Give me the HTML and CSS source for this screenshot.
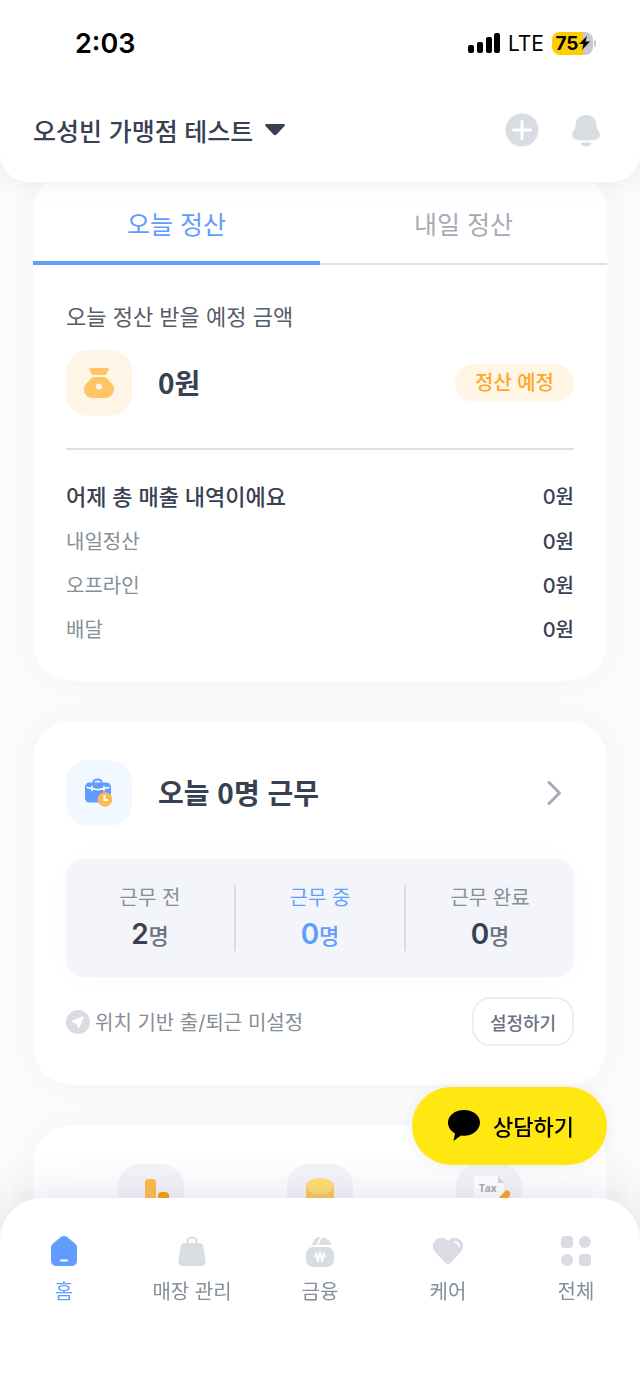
FILE: index.html
```html
<!DOCTYPE html>
<html lang="ko">
<head>
    <meta charset="UTF-8">
    <meta name="viewport" content="width=device-width, initial-scale=1.0">
    <title>오성빈 가맹점 테스트</title>
    <link rel="stylesheet" href="styles.css">
</head>
<body>

<header class="header">
    <div class="status-bar">
        <span class="clock">2:03</span>
        <div class="status-icons">
            <svg width="32" height="20" viewBox="0 0 32 20">
                <rect x="0" y="12" width="6" height="8" rx="2"/>
                <rect x="9" y="9" width="6" height="11" rx="2"/>
                <rect x="18" y="4" width="6" height="16" rx="2"/>
                <rect x="26" y="0" width="6" height="20" rx="2"/>
            </svg>
            <span class="network">LTE</span>
            <div class="battery">
                <span class="battery-level">75</span>
                <svg width="11" height="14" viewBox="0 0 11 14"><path d="M8 0L0 8h4.500L3 14l8-8.500H6.500z"/></svg>
            </div>
        </div>
    </div>
    <div class="title-bar">
        <button class="store-button">
            오성빈 가맹점 테스트
            <svg width="20" height="12" viewBox="0 0 20 12"><path d="M1.500 0h17c1.300 0 1.800 1 1 1.900l-8 8.600c-.9.900-2.100.9-3 0l-8-8.600C-.3 1 .2 0 1.500 0z" fill="#374151"/></svg>
        </button>
        <div class="header-actions">
            <button class="icon-button" aria-label="추가">
                <svg width="34" height="34" viewBox="0 0 34 34"><circle cx="17" cy="17" r="16.500" fill="#d9dce2"/><path d="M17 8.500v17M8.500 17h17" stroke="#fff" stroke-width="3" stroke-linecap="round"/></svg>
            </button>
            <button class="icon-button" aria-label="알림">
                <svg width="28" height="34" viewBox="0 0 28 34"><path d="M14 2C7.500 2 3.500 6.500 3.500 12c0 3-.5 4-1.900 5.800C.6 19 0 20.500 0 22c0 4 4 5.500 14 5.500s14-1.500 14-5.500c0-1.500-.6-3-1.600-4.200-1.400-1.800-1.900-2.800-1.900-5.800C24.500 6.500 20.500 2 14 2z" fill="#d9dce2"/><path d="M10.500 29.500h7c1.500 0 2 .9 1 2-2.300 2.800-6.700 2.800-9 0-1-1.100-.5-2 1-2z" fill="#d9dce2"/></svg>
            </button>
        </div>
    </div>
</header>

<main class="content">
    <section class="card settlement">
        <div class="tabs">
            <button class="tab active">오늘 정산</button>
            <button class="tab">내일 정산</button>
        </div>
        <div class="settlement-body">
            <p class="expect-label">오늘 정산 받을 예정 금액</p>
            <div class="card-row">
                <div class="icon-box orange">
                    <svg width="30" height="30" viewBox="0 0 30 30" fill="#ffc466"><path d="M7 0h16c1.700 0 2.200.8 1.500 2l-2 4c-.4.700-.8 1-1.700 1H9.200c-.9 0-1.300-.3-1.700-1l-2-4C4.800.8 5.300 0 7 0zM9.500 9h11c.8 0 1.300.2 1.900.8l5.200 5.700c1.900 2.100 2.400 3.500 2.400 5.500 0 5-3.500 9-8.500 9h-13C3.500 30 0 26 0 21c0-2 .5-3.400 2.400-5.500l5.200-5.700C8.200 9.200 8.700 9 9.500 9z"/><circle cx="15" cy="18.500" r="3" fill="#fff5e6"/></svg>
                </div>
                <strong class="headline">0원</strong>
                <span class="badge">정산 예정</span>
            </div>
            <table class="sales">
                <tr class="total"><th scope="row">어제 총 매출 내역이에요</th><td>0원</td></tr>
                <tr><th scope="row">내일정산</th><td>0원</td></tr>
                <tr><th scope="row">오프라인</th><td>0원</td></tr>
                <tr><th scope="row">배달</th><td>0원</td></tr>
            </table>
        </div>
    </section>

    <section class="card work">
        <a class="card-row" href="#work">
            <div class="icon-box blue">
                <svg width="30" height="30" viewBox="0 0 30 30"><path d="M9.500 5V4C9.500 2 11 1.500 13.500 1.500S17.500 2 17.500 4V5" fill="none" stroke="#619dff" stroke-width="2"/><rect x="1" y="4.500" width="26" height="20" rx="4.500" fill="#619dff"/><path d="M3 9.500c4 .7 7 1.200 11 2.200 4-1 7-1.500 11-2.200M8 8.500v4M20 8.500v4" fill="none" stroke="#fff" stroke-width="1.500" stroke-linecap="round"/><circle cx="21" cy="21.500" r="7.300" fill="#ffba52"/><path d="M20.500 17V22h3.500" fill="none" stroke="#fff" stroke-width="2"/></svg>
            </div>
            <strong class="headline">오늘 0명 근무</strong>
            <svg class="chevron" width="16" height="24" viewBox="0 0 16 24"><path d="M3 1.500L13.500 12 3 22.500" fill="none" stroke="#a5abb5" stroke-width="3" stroke-linecap="round" stroke-linejoin="round"/></svg>
        </a>
        <div class="work-status">
            <div class="work-item"><span class="work-label">근무 전</span><span class="work-count"><b>2</b>명</span></div>
            <div class="work-item now"><span class="work-label">근무 중</span><span class="work-count"><b>0</b>명</span></div>
            <div class="work-item"><span class="work-label">근무 완료</span><span class="work-count"><b>0</b>명</span></div>
        </div>
        <div class="location">
            <svg width="24" height="24" viewBox="0 0 24 24"><circle cx="12" cy="12" r="12" fill="#d9dce2"/><path d="M16 6.500L6.800 10.500c-1 .5-.9 1.600.1 1.900l3.400 1.200 1.200 3.700c.4 1 1.500 1 1.900.1L17.500 8c.4-1-.5-1.900-1.500-1.500z" fill="#fff"/></svg>
            <span class="location-text">위치 기반 출/퇴근 미설정</span>
            <button class="setting-button">설정하기</button>
        </div>
    </section>

    <section class="card shortcuts">
        <button class="icon-box" aria-label="매출">
            <svg width="36" height="36" viewBox="0 0 36 36"><rect x="12" y="0" width="11" height="34" rx="3" fill="#ffbe4d"/><rect x="25" y="13" width="11" height="21" rx="4" fill="#ff9f00"/></svg>
        </button>
        <button class="icon-box" aria-label="대출">
            <svg width="30" height="38" viewBox="0 0 30 38"><path d="M1 8v22c0 4 6 6 14 6s14-2 14-6V8z" fill="#ffc75a"/><ellipse cx="15" cy="8" rx="14" ry="8" fill="#ffdf75"/></svg>
        </button>
        <button class="icon-box" aria-label="세금">
            <svg width="42" height="42" viewBox="0 0 42 42"><path d="M6 0h24l6 7v35H6z" fill="#fff"/><path d="M30 0l6 7h-6z" fill="#d2d5dc"/><text class="tax" x="11" y="16">Tax</text><path d="M29 29L39 18" stroke="#ffa32b" stroke-width="7" stroke-linecap="round"/></svg>
        </button>
    </section>
</main>

<button class="chat-button">
    <svg width="32" height="32" viewBox="0 0 32 32"><path d="M16 1C7 1 0 6.500 0 13.500c0 5 3 8.800 7 11L5.500 32l7.500-5.500c1 .1 2 .2 3 .2 9 0 16-6 16-13.200S25 1 16 1z"/></svg>
    상담하기
</button>

<nav class="bottom-nav">
    <a class="nav-item active" href="#home">
        <svg width="32" height="32" viewBox="0 0 32 32"><path d="M12.500 2.200c2-1.600 5-1.600 7 0l7.200 6c1.500 1.300 2.300 2.500 2.300 4.500V25c0 4-2 6-6 6H9c-4 0-6-2-6-6V12.700c0-2 .8-3.200 2.300-4.500z" fill="currentColor"/><path d="M13 25.500h6" stroke="#fff" stroke-width="2" stroke-linecap="round"/></svg>
        홈
    </a>
    <a class="nav-item" href="#store">
        <svg width="32" height="32" viewBox="0 0 32 32"><path d="M11.500 9V6.500C11.500 4 13.500 2.500 16 2.500s4.500 1.500 4.500 4V9" fill="none" stroke="#d9dce2" stroke-width="2"/><path d="M8.500 8h15c2 0 3.300 1 3.700 3l2.500 15c.5 3-1 5-4 5H6.300c-3 0-4.500-2-4-5l2.500-15c.4-2 1.700-3 3.700-3z" fill="#d9dce2"/></svg>
        매장 관리
    </a>
    <a class="nav-item" href="#finance">
        <svg width="32" height="32" viewBox="0 0 32 32"><path d="M8 10c.8-3.800 3-7 6-8l2 0-3.500 8zM18 2.500c5 .5 8.500 3 9.500 7.500H14.500z" fill="#d9dce2"/><rect x="2" y="12" width="28" height="20" rx="7" fill="#d9dce2"/><path d="M12 17l2 9.500 2-9.500 2 9.500 2-9.500M10 21h12" fill="none" stroke="#fff" stroke-width="1.700" stroke-linejoin="round"/></svg>
        금융
    </a>
    <a class="nav-item" href="#care">
        <svg width="32" height="32" viewBox="0 0 34 32"><path d="M17 5.500C21 .5 27 1 30.500 4.500s3.500 9 0 12.500L20 28.500c-2 2-4 2-6 0L3.500 17C0 13.500 0 8 3.500 4.500S13 .5 17 5.500z" fill="#d9dce2"/><path d="M24.500 6.500c2.500.3 4 1.800 4.300 4.200" fill="none" stroke="#fff" stroke-width="2" stroke-linecap="round"/></svg>
        케어
    </a>
    <a class="nav-item" href="#all">
        <svg width="32" height="32" viewBox="0 0 32 32" fill="#d9dce2"><rect x="1" y="1" width="12" height="12" rx="3"/><circle cx="25" cy="7" r="6"/><circle cx="7" cy="25" r="6"/><rect x="19" y="19" width="12" height="12" rx="3"/></svg>
        전체
    </a>
</nav>

</body>
</html>
```
FILE: styles.css
```css
* {
    box-sizing: border-box;
}
body {
    font-family: Inter, "Noto Sans CJK KR", sans-serif;
    font-size: 20px;
    color: #374151;
    background-color: #fbfbfb;
    margin: 0;
}
button {
    font: inherit;
    color: inherit;
    background: none;
    border: none;
    padding: 0;
    cursor: pointer;
}
a {
    color: inherit;
    text-decoration: none;
}
svg {
    display: block;
    flex: none;
}
.header {
    position: sticky;
    top: 0;
    z-index: 2;
    background-color: #fff;
    border-radius: 0 0 28px 28px;
    box-shadow: 0 0 24px rgba(0, 0, 0, 0.08);
    padding-bottom: 33px;
}
.status-bar {
    display: flex;
    align-items: center;
    justify-content: space-between;
    padding: 28px 47px 0 75px;
    height: 58px;
    color: #000;
}
.clock {
    font-size: 27px;
    font-weight: 600;
}
.status-icons {
    display: flex;
    align-items: center;
    gap: 8px;
}
.network {
    font-size: 21px;
}
.battery {
    position: relative;
    display: flex;
    align-items: center;
    justify-content: center;
    width: 41px;
    height: 23px;
    border-radius: 8px;
    background: linear-gradient(to right, #ffcc00 75%, #c9c9c9 75%);
}
.battery::after {
    content: "";
    position: absolute;
    left: 42px;
    width: 2px;
    height: 7px;
    border-radius: 0 2px 2px 0;
    background-color: #c9c9c9;
}
.battery-level {
    font-size: 19px;
    font-weight: 700;
}
.title-bar {
    display: flex;
    align-items: center;
    justify-content: space-between;
    padding: 0 40px 0 33px;
    margin-top: 53px;
    height: 38px;
}
.store-button {
    display: flex;
    align-items: center;
    gap: 12px;
    font-size: 25px;
    font-weight: 500;
}
.header-actions {
    display: flex;
    gap: 33px;
}
.content {
    display: flex;
    flex-direction: column;
    gap: 40px;
    padding: 0 33px;
    margin-top: -9px;
}
.card {
    background-color: #fff;
    border-radius: 38px;
    box-shadow: 0 0 36px rgba(0, 0, 0, 0.03);
}
.tabs {
    display: flex;
    height: 92px;
    border-bottom: 2px solid #dcdfe6;
}
.tab {
    flex: 1;
    height: 92px;
    padding-top: 12px;
    border-bottom: 4px solid transparent;
    font-size: 25px;
    color: #a5abb5;
}
.tab.active {
    color: #619dff;
    border-color: #619dff;
}
.settlement-body {
    padding: 36px 33px 31px;
}
.expect-label {
    margin: 0 0 17px;
    font-size: 22px;
    line-height: 32px;
    color: #555d69;
}
.card-row {
    display: flex;
    align-items: center;
}
.icon-box {
    display: flex;
    align-items: center;
    justify-content: center;
    width: 66px;
    height: 66px;
    border-radius: 22px;
    background-color: #f4f5fa;
}
.icon-box.orange {
    background-color: #fff5e6;
}
.icon-box.blue {
    background-color: #f2f8ff;
}
.headline {
    margin-left: 26px;
    padding-bottom: 2px;
    font-family: "Noto Sans CJK KR", sans-serif;
    font-size: 28px;
    font-weight: 600;
}
.badge {
    margin-left: auto;
    padding: 0 20px;
    border-radius: 19px;
    background-color: #fff6e5;
    color: #ffa62b;
    font-weight: 500;
    line-height: 38px;
}
.sales {
    width: 100%;
    margin-top: 32px;
    padding-top: 22px;
    border-top: 2px solid #dcdfe6;
    border-spacing: 0;
}
.sales th,
.sales td {
    height: 44px;
    padding: 0;
    font-weight: 400;
}
.sales th {
    text-align: left;
    color: #868e98;
}
.sales td {
    text-align: right;
    font-weight: 500;
}
.sales .total th {
    height: 46px;
    font-size: 22px;
    font-weight: 500;
    color: #374151;
}
.work {
    padding: 39px 33px;
}
.chevron {
    margin: 0 12px 0 auto;
}
.work-status {
    display: flex;
    margin-top: 33px;
    padding: 26px 0;
    border-radius: 18px;
    background-color: #f4f5fa;
    box-shadow: 0 0 36px rgba(0, 0, 0, 0.02);
}
.work-item {
    display: flex;
    flex: 1;
    flex-direction: column;
    align-items: center;
    height: 66px;
    color: #868e98;
}
.work-item + .work-item {
    border-left: 2px solid #d9dce2;
}
.work-label {
    line-height: 26px;
}
.work-count {
    font-size: 22px;
    font-weight: 500;
    line-height: 46px;
    color: #6b7280;
}
.work-count b {
    font-size: 28px;
    font-weight: 600;
    color: #374151;
}
.work-item.now,
.work-item.now .work-count,
.work-item.now b {
    color: #619dff;
}
.location {
    display: flex;
    align-items: center;
    margin-top: 20px;
    color: #868e98;
}
.location-text {
    margin-left: 5px;
}
.setting-button {
    margin-left: auto;
    width: 102px;
    height: 49px;
    border: 2px solid #ebeef4;
    border-radius: 18px;
    background-color: #fff;
    color: #6b7280;
    font-size: 18px;
    font-weight: 500;
}
.shortcuts {
    display: flex;
    justify-content: space-around;
    padding: 39px 33px;
}
.tax {
    font-family: "Open Sans", sans-serif;
    font-size: 10px;
    font-weight: 700;
    fill: #a5abb5;
}
.chat-button {
    position: fixed;
    right: 33px;
    bottom: 220px;
    z-index: 1;
    display: flex;
    align-items: center;
    gap: 13px;
    height: 78px;
    padding: 0 33px 2px 36px;
    border-radius: 39px;
    background-color: #ffe812;
    box-shadow: 0 0 16px rgba(0, 0, 0, 0.06);
    color: #000;
    font-size: 22px;
    font-weight: 500;
}
.bottom-nav {
    position: fixed;
    left: 0;
    right: 0;
    bottom: 0;
    display: flex;
    padding: 37px 0 77px;
    border-radius: 42px 42px 0 0;
    background-color: #fff;
    box-shadow: 0 0 48px rgba(60, 50, 120, 0.16);
}
.nav-item {
    display: flex;
    flex: 1;
    flex-direction: column;
    align-items: center;
    gap: 10px;
    height: 73px;
    line-height: 30px;
    color: #868e98;
}
.nav-item.active {
    color: #619dff;
}
```
